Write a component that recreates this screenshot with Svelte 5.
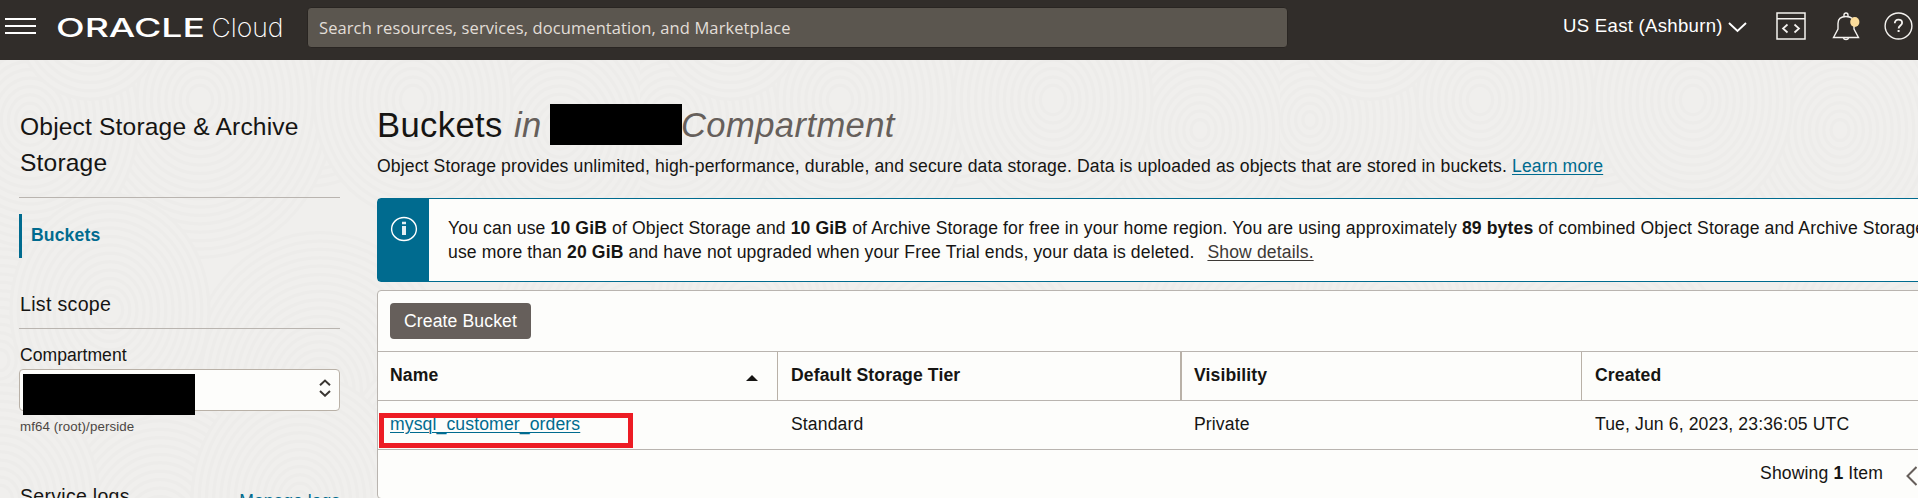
<script>
  const columns = ['Name', 'Default Storage Tier', 'Visibility', 'Created'];
  const buckets = [
    { name: 'mysql_customer_orders', tier: 'Standard', visibility: 'Private', created: 'Tue, Jun 6, 2023, 23:36:05 UTC' }
  ];

  // Overlapping groups of concentric rings for the backdrop tile.
  const swirls = [
    [320, 330, 150], [0, 300, 170], [640, 300, 170], [160, 470, 160], [480, 450, 170],
    [90, -60, 150], [560, -20, 150], [310, 0, 120],
    [200, 40, 150], [30, 60, 120], [670, 60, 120], [560, 70, 130], [413, 40, 110],
    [110, 250, 110], [300, 440, 120], [90, -50, 85], [0, 440, 110], [640, 440, 110]
  ];
  const radii = (max) => Array.from({ length: Math.floor(max / 8) }, (_, i) => max - i * 8);
</script>

<div class="page">
  <svg class="backdrop" width="1918" height="438" aria-hidden="true">
    <defs>
      <pattern id="swirls" width="640" height="438" patternUnits="userSpaceOnUse">
        <rect width="640" height="438" fill="#f0efed" />
        {#each swirls as [cx, cy, max]}
          {#each radii(max) as r}
            <ellipse {cx} {cy} rx={r * 0.9} ry={r * 1.05} fill="#f0efed" stroke="#edecea" stroke-width="3" />
          {/each}
        {/each}
      </pattern>
    </defs>
    <rect width="1918" height="438" fill="url(#swirls)" />
  </svg>

  <header>
    <svg class="menu" width="31" height="18" viewBox="0 0 31 18">
      <path d="M0 2h31M0 9h31M0 16h31" stroke="#fff" stroke-width="2" />
    </svg>
    <svg class="logo" width="232" height="30" viewBox="0 0 232 30">
      <text x="0" y="24.5" class="oracle" textLength="149" lengthAdjust="spacingAndGlyphs">ORACLE</text>
      <text x="155.5" y="24.5" class="cloud" textLength="72" lengthAdjust="spacingAndGlyphs">Cloud</text>
    </svg>
    <div class="search">Search resources, services, documentation, and Marketplace</div>
    <div class="region">
      US East (Ashburn)
      <svg width="19" height="11" viewBox="0 0 19 11"><path d="M1 1l8.5 8L18 1" fill="none" stroke="#fff" stroke-width="1.9" /></svg>
    </div>
    <svg class="code" width="30" height="28" viewBox="0 0 30 28" fill="none" stroke="#f5f3f0">
      <path d="M1 1h28v26H1zM1 6.7h28" stroke-width="1.5" />
      <path d="M11.5 12.5l-4.5 4 4.5 4M18.5 12.5l4.5 4-4.5 4" stroke-width="1.7" />
    </svg>
    <svg class="bell" width="30" height="30" viewBox="0 0 30 30" fill="none" stroke="#f5f3f0" stroke-width="1.4">
      <path d="M1.5 25.5L6 17V11.5C6 7 9 4.5 14 4.5S22 7 22 11.5V17l4.5 8.5z" />
      <path d="M12 4.5V3a2 2 0 0 1 4 0v1.5M11.3 25.5a2.8 2.8 0 0 0 5.4 0" />
      <ellipse cx="22.8" cy="10" rx="4.6" ry="5" fill="#fbdc9b" stroke="none" />
    </svg>
    <svg class="help" width="29" height="28" viewBox="0 0 29 28" fill="none" stroke="#f5f3f0">
      <ellipse cx="14.5" cy="14" rx="13.4" ry="13" stroke-width="1.4" />
      <path d="M10.8 11.2c0-2.3 1.5-3.6 3.6-3.6s3.7 1.3 3.7 3.3c0 2.4-3.5 2.8-3.5 5.6" stroke-width="1.8" />
      <path d="M13.6 19h2" stroke-width="2" />
    </svg>
  </header>

  <div class="body">
    <aside>
      <h2>Object Storage &amp; Archive Storage</h2>
      <nav>Buckets</nav>
      <h3>List scope</h3>
      <label for="compartment">Compartment</label>
      <div class="select" id="compartment">
        <span class="mask"></span>
        <svg width="12" height="18" viewBox="0 0 12 18" fill="none" stroke="#3a3632" stroke-width="2">
          <path d="M1 6.2l5-4.7 5 4.7M1 12l5 4.7 5-4.7" />
        </svg>
      </div>
      <div class="path">mf64 (root)/perside</div>
      <div class="logs"><span>Service logs</span><span class="manage">Manage logs</span></div>
    </aside>

    <main>
      <h1><span>Buckets</span><em class="in">in</em><i class="block"></i><em>Compartment</em></h1>
      <p class="lead">Object Storage provides unlimited, high-performance, durable, and secure data storage. Data is uploaded as objects that are stored in buckets. <span class="link">Learn more</span></p>

      <section class="banner">
        <div class="badge">
          <svg width="28" height="26" viewBox="0 0 28 26">
            <ellipse cx="14" cy="13" rx="12.4" ry="11.5" fill="none" stroke="#fff" stroke-width="1.4" />
            <path d="M12 5.7h4v2.5h-4zM12 10h4v9h-4z" fill="#e4eff3" />
          </svg>
        </div>
        <div class="note">
          <div>You can use <b>10 GiB</b> of Object Storage and <b>10 GiB</b> of Archive Storage for free in your home region. You are using approximately <b>89 bytes</b> of combined Object Storage and Archive Storage</div>
          <div>use more than <b>20 GiB</b> and have not upgraded when your Free Trial ends, your data is deleted. <span class="details">Show details.</span></div>
        </div>
      </section>

      <section class="panel">
        <div class="toolbar"><button>Create Bucket</button></div>
        <div class="row head">
          {#each columns as column, i}
            <div>
              {column}
              {#if i === 0}<svg width="12" height="6" viewBox="0 0 12 6"><path d="M0 6l6-6 6 6z" fill="#161513" /></svg>{/if}
            </div>
          {/each}
        </div>
        {#each buckets as bucket}
          <div class="row">
            <div><span class="link">{bucket.name}</span><span class="marker"></span></div>
            <div>{bucket.tier}</div>
            <div>{bucket.visibility}</div>
            <div>{bucket.created}</div>
          </div>
        {/each}
        <div class="footer">
          <span>Showing <b>1</b> Item</span>
          <svg width="11" height="20" viewBox="0 0 11 20"><path d="M10.5 1L1.5 10l9 9" fill="none" stroke="#665f5b" stroke-width="2" /></svg>
        </div>
      </section>
    </main>
  </div>
</div>

<style>
  :global(body) { overflow: hidden; background: #f0efed; }
  .page {
    position: relative;
    width: 1918px;
    height: 498px;
    overflow: hidden;
    font: 17.6px/24px "Liberation Sans", Arial, sans-serif;
    letter-spacing: 0.12px;
    color: #161513;
    white-space: nowrap;
  }
  .page * { box-sizing: border-box; }
  .backdrop { position: absolute; left: 0; top: 60px; }

  header {
    position: relative;
    display: flex;
    align-items: flex-start;
    height: 60px;
    background: #312d2a;
    color: #fff;
  }
  header svg { display: block; flex: none; }
  .menu { margin: 17px 20px 0 5px; }
  .logo { margin-top: 12px; margin-right: 19px; }
  .oracle { font: 500 25.5px Inter, sans-serif; letter-spacing: 0; fill: #fff; }
  .cloud { font: 200 26px Inter, sans-serif; letter-spacing: 0; fill: #fff; }
  .search {
    flex: none;
    width: 981px;
    height: 41px;
    margin-top: 7px;
    padding-left: 11px;
    border: 1px solid #292522;
    border-radius: 4px;
    background: #5b564f;
    color: #e2ded8;
    font: 16.5px/39px "Open Sans", sans-serif;
    letter-spacing: 0.1px;
  }
  .region {
    display: flex;
    flex: none;
    width: 186px;
    margin: 14px 27px 0 275px;
    font-size: 18.6px;
    letter-spacing: 0.28px;
  }
  .region svg { margin: 8px 0 0 5px; }
  .code { margin-top: 12px; }
  .bell { margin: 12px 0 0 26px; }
  .help { margin: 12px 0 0 22px; }

  .body { position: relative; display: flex; }
  aside { width: 321px; margin-left: 19px; padding: 49px 0 0 1px; flex: none; }
  h2 {
    height: 89px;
    margin: 0 0 0 -1px;
    padding-left: 1px;
    border-bottom: 1px solid #b9b4af;
    font: 24.6px/36px "Liberation Sans", sans-serif;
    letter-spacing: 0.16px;
    white-space: normal;
  }
  nav {
    height: 44px;
    margin: 16px 0 0 -1px;
    padding-left: 9px;
    border-left: 3px solid #006b8f;
    color: #006b8f;
    font-weight: 700;
    line-height: 43px;
  }
  h3 {
    height: 37px;
    margin: 34px 0 0 -1px;
    border-bottom: 1px solid #b9b4af;
    padding-left: 1px;
    font: 19.6px/24px "Liberation Sans", sans-serif;
    letter-spacing: 0.3px;
  }
  label { display: block; margin-top: 14px; letter-spacing: 0; }
  .select {
    display: flex;
    align-items: center;
    justify-content: space-between;
    height: 42px;
    margin: 2px 0 0 -1px;
    padding: 0 8px 0 3px;
    border: 1px solid #b9b1a7;
    border-radius: 4px;
    background: #fdfdfb;
  }
  .mask { width: 172px; height: 41px; margin-top: 8px; background: #000; }
  .select svg { margin-top: -4px; }
  .path { margin-top: 4px; font-size: 13.3px; letter-spacing: 0.1px; color: #4c4743; }
  .logs { display: flex; justify-content: space-between; margin-top: 45px; font-size: 19.5px; letter-spacing: 0.3px; }
  .manage { margin-top: 5px; color: #006b8f; font-size: 17.6px; letter-spacing: 0; }

  main { flex: none; width: 1600px; padding: 43px 0 0 37px; }
  h1 {
    display: flex;
    align-items: center;
    height: 44px;
    margin: 0;
    font: 34.6px/44px "Liberation Sans", sans-serif;
    letter-spacing: 0.4px;
  }
  h1 span { width: 137px; }
  h1 em { color: #665f5b; }
  .in { width: 36px; }
  .block { width: 132px; height: 41px; margin: -1px -1px 0 0; background: #000; }
  .lead { margin: 7px 0 20px; }
  .link { color: #006b8f; text-decoration: underline; text-decoration-thickness: 1px; text-underline-offset: 2px; }

  .banner {
    display: flex;
    height: 84px;
    border: 1px solid #006b8f;
    border-radius: 4px;
    background: #fdfdfb;
  }
  .badge { flex: none; width: 51px; padding: 17px 0 0 12px; background: #006b8f; }
  .note { padding: 17px 0 0 19px; }
  .details { margin-left: 8px; color: #3d3936; text-decoration: underline; text-decoration-thickness: 1px; text-underline-offset: 2px; }

  .panel {
    height: 209px;
    margin-top: 8px;
    border: 1px solid #b9b4af;
    border-radius: 4px;
    background: #fdfdfb;
  }
  .toolbar { height: 61px; padding: 12px 0 0 12px; border-bottom: 1px solid #b9b4af; }
  button {
    display: block;
    width: 141px;
    height: 36px;
    padding: 0;
    border: 0;
    border-radius: 4px;
    background: #665f5b;
    color: #fff;
    font: 17.6px/36px "Liberation Sans", sans-serif;
    letter-spacing: 0.12px;
  }
  .row {
    display: grid;
    grid-template-columns: 400px 404px 400px 1fr;
    height: 49px;
    border-bottom: 1px solid #b9b4af;
  }
  .row > div { position: relative; padding: 11px 12px 0 13px; }
  .row > div:first-child { padding-left: 12px; }
  .row > div:nth-child(3) { padding-left: 12px; }
  .head { font-weight: 700; }
  .head > div { display: flex; justify-content: space-between; border-right: 1px solid #b9b1a7; }
  .head > div:nth-child(2) { border-right-width: 2px; }
  .head svg { margin: 12px 7px 0 0; }
  .marker { position: absolute; left: 1px; top: 12px; width: 254px; height: 35px; border: 5px solid #ed1c24; }
  .footer { display: flex; justify-content: flex-end; width: 1539px; padding-top: 11px; }
  .footer svg { margin: 5px 0 0 23px; }
</style>
